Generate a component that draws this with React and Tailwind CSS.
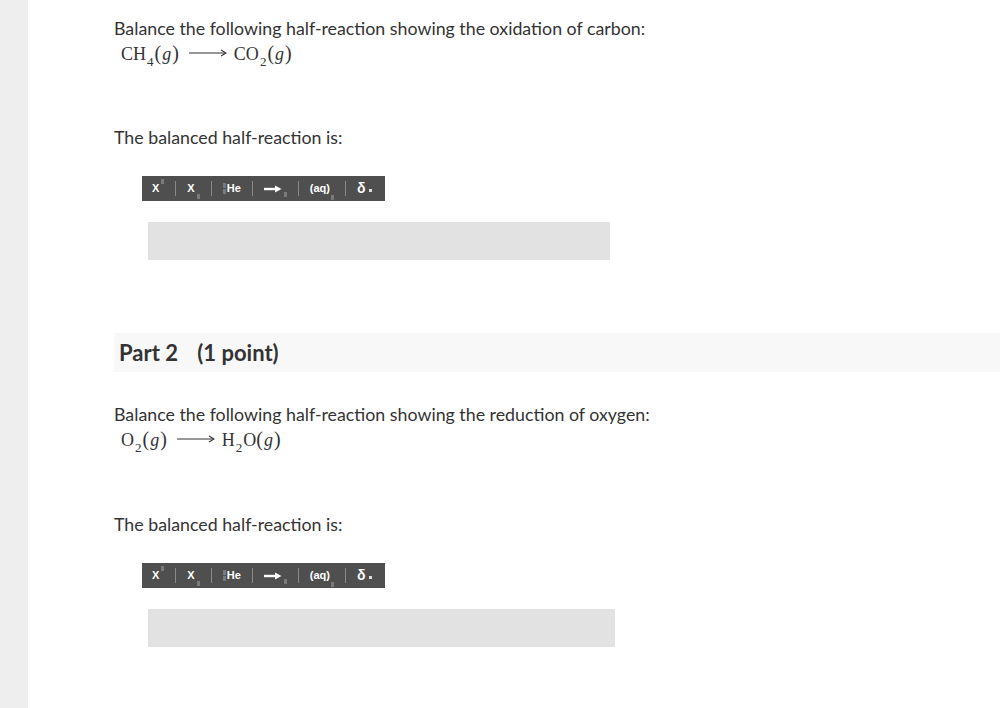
import React from 'react';

const lato = { fontFamily: 'Lato, "Open Sans", sans-serif' };

function Arrow() {
  return (
    <svg width="38" height="10" viewBox="0 0 38 10" className="ml-[10px] mr-[7px] inline-block">
      <line x1="0" y1="5" x2="36" y2="5" stroke="#333" strokeWidth="1.2" />
      <path d="M32 2 L37 5 L32 8" fill="none" stroke="#333" strokeWidth="1.1" />
    </svg>
  );
}

function Sub({ children }) {
  return <span className="relative top-[6px] text-[13px] leading-none ml-[1px] mr-[1px]">{children}</span>;
}

function G() {
  return (
    <span>
      <span className="text-[20px]">(</span><i className="px-[1px]">g</i><span className="text-[20px]">)</span>
    </span>
  );
}

function Formula({ left, right }) {
  return (
    <div className="flex items-center h-[26px] pl-[7px] text-[18px] text-[#333]" style={{ fontFamily: '"Liberation Serif", "DejaVu Serif", serif' }}>
      {left}
      <Arrow />
      {right}
    </div>
  );
}

function Sep() {
  return <span className="w-px h-[15px] bg-[#8a8a8a] mx-[11px]" />;
}

function Box({ className = '' }) {
  return <span className={`inline-block w-[3px] h-[5px] bg-[#7a7a7a] ${className}`} />;
}

function Toolbar() {
  return (
    <div className="ml-[28px] w-[243px] h-[25px] bg-[#4f4f4f] flex items-center pl-[10px] text-white text-[11px] font-bold" style={{ fontFamily: '"Liberation Sans", Arial, sans-serif' }}>
      <span className="flex items-start">X<Box className="ml-[2px] -mt-[1px]" /></span>
      <Sep />
      <span className="flex items-end">X<Box className="ml-[2px] mb-[-2px]" /></span>
      <Sep />
      <span className="flex items-center"><span className="flex flex-col gap-[1px] mr-[1px]"><Box /><Box /></span>He</span>
      <Sep />
      <span className="flex items-end">
        <svg width="18" height="8" viewBox="0 0 18 8"><line x1="0" y1="4" x2="13" y2="4" stroke="white" strokeWidth="2.4" /><path d="M11 0.5 L17.5 4 L11 7.5 Z" fill="white" /></svg>
        <Box className="ml-[2px] mb-[-4px]" />
      </span>
      <Sep />
      <span className="flex items-end">(aq)<Box className="ml-[1px] mb-[-3px]" /></span>
      <Sep />
      <span className="flex items-center text-[14px]">δ<span className="ml-[4px] w-[3px] h-[3px] bg-[#ddd] mt-[4px]" /></span>
    </div>
  );
}

function Section({ formula, inputWidth, gap }) {
  return (
    <div>
      <p className="text-[17.8px] leading-[22px] text-[#333]">Balance the following half-reaction showing the {formula.label}</p>
      <div className="mt-[1px]">{formula.el}</div>
      <p className={`${gap} text-[17.8px] leading-[22px] text-[#333]`}>The balanced half-reaction is:</p>
      <div className="mt-[28px]"><Toolbar /></div>
      <div className={`mt-[21px] ml-[34px] h-[38px] bg-[#e2e2e2] ${inputWidth}`} />
    </div>
  );
}

export default function App() {
  return (
    <div className="flex min-h-[708px] bg-white" style={lato}>
      <div className="w-[28px] bg-[#eeeeee] shrink-0" />
      <div className="flex-1 pl-[86px] pt-[17px]">
        <Section
          gap="mt-[60px]"
          inputWidth="w-[462px]"
          formula={{
            label: 'oxidation of carbon:',
            el: <Formula left={<span>CH<Sub>4</Sub><G /></span>} right={<span>CO<Sub>2</Sub><G /></span>} />,
          }}
        />
        <div className="mt-[73px] h-[39px] bg-[#f8f8f8] flex items-center pl-[5px]">
          <h2 className="text-[22px] font-bold text-[#333]">Part 2 <span className="ml-[14px]">(1 point)</span></h2>
        </div>
        <div className="mt-[31px]">
          <Section
            gap="mt-[61px]"
            inputWidth="w-[467px]"
            formula={{
              label: 'reduction of oxygen:',
              el: <Formula left={<span>O<Sub>2</Sub><G /></span>} right={<span>H<Sub>2</Sub>O<G /></span>} />,
            }}
          />
        </div>
      </div>
    </div>
  );
}
